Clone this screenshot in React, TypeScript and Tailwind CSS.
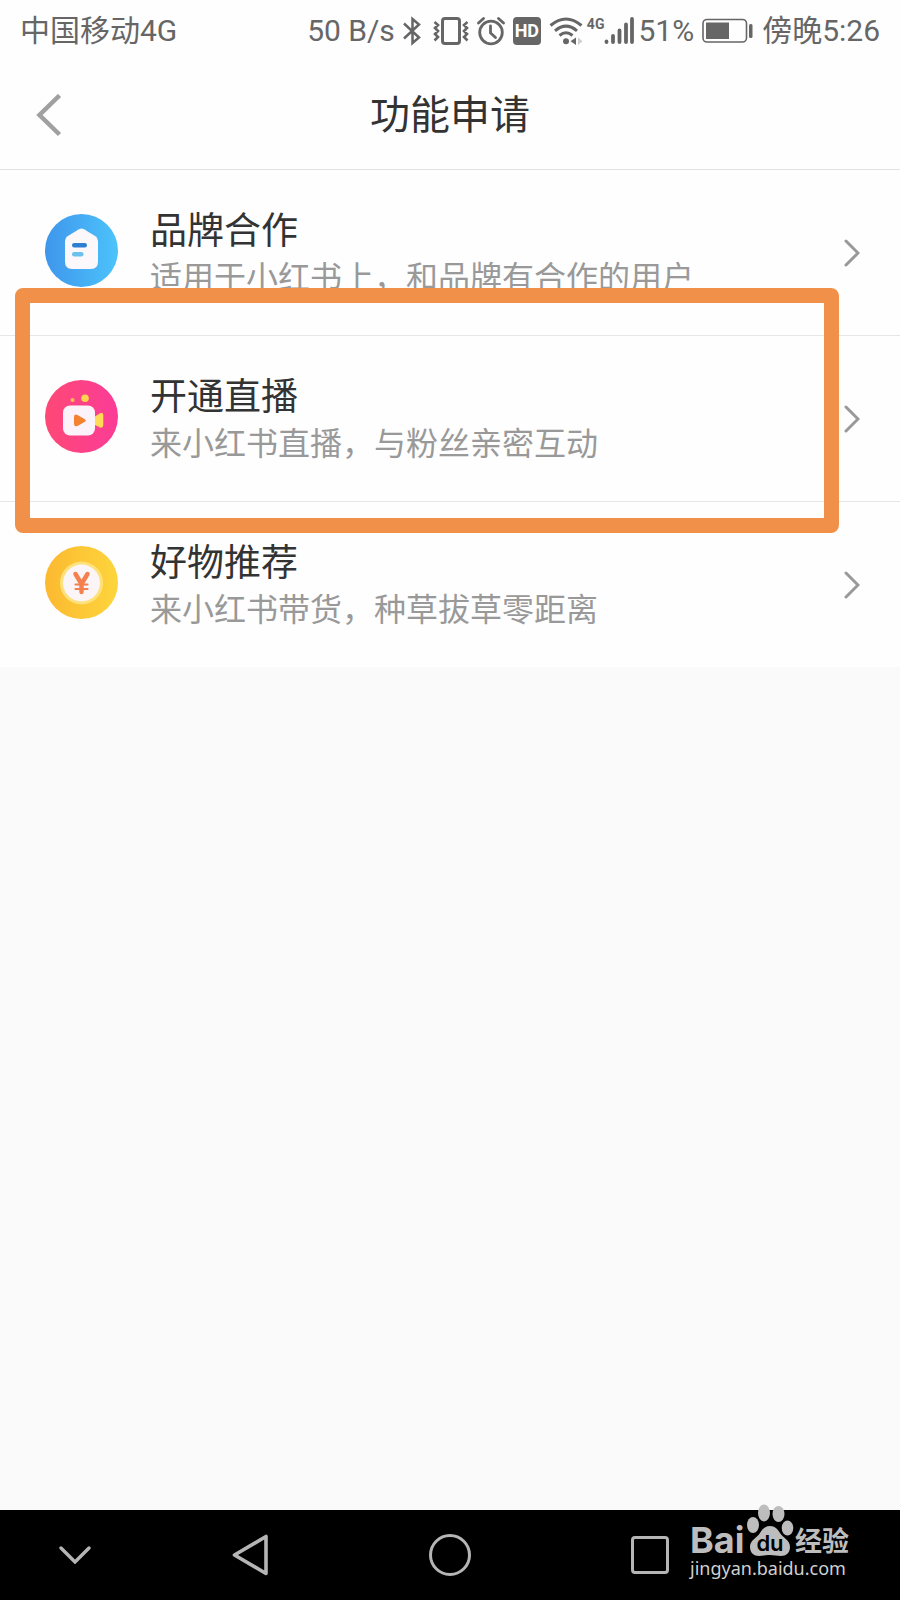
import React from "react";

interface Feature {
  title: string;
  description: string;
  icon: React.ReactNode;
}

const BrandIcon = () => (
  <svg viewBox="0 0 73 73" className="h-[73px] w-[73px] shrink-0" aria-hidden="true">
    <defs>
      <linearGradient id="brand" x1="0" x2="1">
        <stop offset="0" stopColor="#3f96ec" />
        <stop offset="1" stopColor="#4cc3fb" />
      </linearGradient>
    </defs>
    <circle cx="36.5" cy="36.5" r="36.5" fill="url(#brand)" />
    <path
      d="M34 15.2Q36.5 13.8 39 15.2L50.5 22.3Q53 24 53 27V47.5Q53 55 46 55H27Q20 55 20 47.5V27Q20 24 22.5 22.3Z"
      fill="#fbf7fb"
    />
    <rect x="27" y="29" width="15" height="4.5" rx="2.2" fill="#2f7fd0" />
    <rect x="27" y="38" width="11.5" height="4.5" rx="2.2" fill="#6cc0ee" />
  </svg>
);

const LiveIcon = () => (
  <svg viewBox="0 0 73 73" className="h-[73px] w-[73px] shrink-0" aria-hidden="true">
    <defs>
      <linearGradient id="live" x1="0" x2="1">
        <stop offset="0" stopColor="#fe4876" />
        <stop offset="1" stopColor="#fb3c97" />
      </linearGradient>
    </defs>
    <circle cx="36.5" cy="36.5" r="36.5" fill="url(#live)" />
    <circle cx="27.5" cy="20" r="2" fill="#ffc04f" />
    <circle cx="40" cy="18.3" r="3.8" fill="#ffd24f" />
    <path
      d="M50 36.5L55 33.2Q58 32 58.3 35V45Q58 48.5 55 47.5L50 45Z"
      fill="#ffd958"
    />
    <rect x="18" y="25.5" width="32" height="30" rx="7" fill="#fbf3f9" />
    <path
      d="M29 37Q29.2 33.6 32.5 35L39.5 39Q42 40.5 39.5 42L32.5 46Q29.2 47.3 29 44Z"
      fill="#f5822f"
    />
  </svg>
);

const GoodsIcon = () => (
  <svg viewBox="0 0 73 73" className="h-[73px] w-[73px] shrink-0" aria-hidden="true">
    <defs>
      <linearGradient id="goods" x1="0" x2="1">
        <stop offset="0" stopColor="#fcb930" />
        <stop offset="1" stopColor="#fdd53c" />
      </linearGradient>
    </defs>
    <circle cx="36.5" cy="36.5" r="36.5" fill="url(#goods)" />
    <circle cx="36.5" cy="37" r="21.5" fill="#ffe17c" />
    <circle cx="36.5" cy="37" r="18.5" fill="#fbf5f8" />
    <path
      d="M30.5 28L36.5 38M42.5 28L36.5 38V46"
      fill="none"
      stroke="#f4804f"
      strokeWidth="4.4"
      strokeLinecap="round"
      strokeLinejoin="round"
    />
    <path
      d="M30.5 38.5H42.5M30.5 43H42.5"
      fill="none"
      stroke="#f4804f"
      strokeWidth="2.2"
      strokeLinecap="round"
    />
  </svg>
);

const features: Feature[] = [
  {
    title: "品牌合作",
    description: "适用于小红书上，和品牌有合作的用户",
    icon: <BrandIcon />,
  },
  {
    title: "开通直播",
    description: "来小红书直播，与粉丝亲密互动",
    icon: <LiveIcon />,
  },
  {
    title: "好物推荐",
    description: "来小红书带货，种草拔草零距离",
    icon: <GoodsIcon />,
  },
];

const BluetoothIcon = () => (
  <svg viewBox="0 0 18 30" className="h-[30px] w-[18px]" aria-hidden="true">
    <path
      d="M1 7.5L16 21.5L9.5 27V3L16 8.5L1 22.5"
      fill="none"
      stroke="currentColor"
      strokeWidth="2.5"
    />
  </svg>
);

const VibrateIcon = () => (
  <svg viewBox="0 0 36 30" className="h-[30px] w-9" aria-hidden="true">
    <rect
      x="9.5"
      y="2.5"
      width="17"
      height="25"
      rx="2.5"
      fill="none"
      stroke="currentColor"
      strokeWidth="3"
    />
    <path
      d="M1.5 6L5 9L2 12L5 15L2 18L5 21L1.5 24.5M34.5 6L31 9L34 12L31 15L34 18L31 21L34.5 24.5"
      fill="none"
      stroke="currentColor"
      strokeWidth="2.6"
    />
  </svg>
);

const AlarmIcon = () => (
  <svg viewBox="0 0 28 30" className="h-[30px] w-7" aria-hidden="true">
    <g fill="none" stroke="currentColor" strokeWidth="2.8">
      <circle cx="14" cy="16.5" r="11.3" />
      <path d="M13.5 10V17L18.5 21.5" strokeLinecap="round" />
      <path d="M1.5 7L6.5 2.5M26.5 7L21.5 2.5" strokeLinecap="round" />
    </g>
  </svg>
);

const WifiIcon = () => (
  <svg viewBox="0 0 34 30" className="h-[30px] w-[34px]" aria-hidden="true">
    <g fill="none" stroke="currentColor" strokeWidth="3">
      <path d="M1.5 9.5Q17 -3.5 32.5 9.5" />
      <path d="M6 14.8Q17 5.5 28 14.8" />
      <path d="M10.5 19.5Q17 14 23.5 19.5" />
    </g>
    <circle cx="17" cy="25.3" r="3" fill="currentColor" />
    <path d="M27 21.5V29L21.5 25.3Z" fill="currentColor" />
    <path d="M29 21.5V29L33.5 25.3Z" fill="#cfcfcf" />
  </svg>
);

const SignalIcon = () => (
  <svg viewBox="0 0 30 30" className="h-[30px] w-[30px]" aria-hidden="true">
    <path
      d="M2.5 25.5V26M9 20V26M15.5 14.5V26M22 8.5V26M28 3V26"
      fill="none"
      stroke="currentColor"
      strokeWidth="3.8"
      strokeLinecap="round"
    />
  </svg>
);

const BatteryIcon = () => (
  <svg viewBox="0 0 52 26" className="h-[26px] w-[52px]" aria-hidden="true">
    <rect
      x="1"
      y="1.5"
      width="43.5"
      height="22.5"
      rx="4"
      fill="none"
      stroke="currentColor"
      strokeWidth="1.6"
    />
    <rect x="4" y="4.5" width="23" height="16.5" fill="currentColor" />
    <rect x="47" y="6" width="3.5" height="14" rx="1.5" fill="currentColor" />
  </svg>
);

const StatusBar = () => (
  <div className="flex h-[62px] items-center justify-between px-5 font-[Roboto,'Noto_Sans_CJK_SC',sans-serif] text-3xl leading-none text-[#666]">
    <span>中国移动4G</span>
    <div className="flex items-center whitespace-nowrap">
      <span className="mr-2">50 B/s</span>
      <BluetoothIcon />
      <span className="ml-3">
        <VibrateIcon />
      </span>
      <span className="ml-2">
        <AlarmIcon />
      </span>
      <span className="ml-2 flex h-7 w-7 items-center justify-center rounded bg-[#666] text-lg font-bold text-white">
        HD
      </span>
      <span className="ml-2">
        <WifiIcon />
      </span>
      <span className="ml-1 self-start text-sm font-bold leading-4">4G</span>
      <SignalIcon />
      <span className="ml-1 mr-2">51%</span>
      <BatteryIcon />
      <span className="ml-2">傍晚5:26</span>
    </div>
  </div>
);

const Header = () => (
  <header className="grid h-[108px] grid-cols-[1fr_auto_1fr] items-center border-b border-[#e3e3e3]">
    <button type="button" aria-label="返回" className="ml-9 w-fit text-[#a0a0a0]">
      <svg viewBox="0 0 26 44" className="h-11 w-[26px]" aria-hidden="true">
        <path
          d="M23.5 1.5L3.5 21L23.5 40.5"
          fill="none"
          stroke="currentColor"
          strokeWidth="4.5"
        />
      </svg>
    </button>
    <h1 className="pb-2 text-[40px] leading-none text-[#333]">功能申请</h1>
  </header>
);

const FeatureRow = ({ title, description, icon }: Feature) => (
  <li className="border-b border-[#e6e6e6] last:border-b-0">
    <button
      type="button"
      className="flex h-[165px] w-full items-center pl-[45px] pr-10 text-left"
    >
      <span className="flex flex-1 items-center gap-8 pb-1">
        {icon}
        <span>
          <span className="block text-[37px] leading-[48px] text-[#333]">{title}</span>
          <span className="block text-[32px] leading-[46px] text-[#999]">
            {description}
          </span>
        </span>
      </span>
      <svg viewBox="0 0 16 28" className="h-7 w-4 text-[#999]" aria-hidden="true">
        <path
          d="M2 2L14 14L2 26"
          fill="none"
          stroke="currentColor"
          strokeWidth="3"
          strokeLinecap="round"
        />
      </svg>
    </button>
  </li>
);

const Watermark = () => (
  <div className="pointer-events-none absolute bottom-[22px] right-[51px] w-[159px] text-[#bdbdbd]">
    <div className="flex items-end justify-between">
      <span className="font-[Inter,sans-serif] text-4xl font-bold leading-9">Bai</span>
      <svg viewBox="0 0 48 54" className="h-[54px] w-12" aria-hidden="true">
        <g fill="currentColor">
          <ellipse cx="7" cy="21" rx="6" ry="8" />
          <ellipse cx="18" cy="9" rx="6" ry="8.5" />
          <ellipse cx="32.5" cy="10" rx="6" ry="8" />
          <ellipse cx="41.5" cy="24" rx="5.8" ry="7.5" />
          <path d="M24 22C29 22 31.5 25 34 29C37 34 44 36 44 43C44 49 40 52 35 52C31 52 28 51 24 51C20 51 17 52 13 52C8 52 4 49 4 43C4 36 11 34 14 29C16.5 25 19 22 24 22Z" />
        </g>
        <text
          x="24"
          y="47"
          textAnchor="middle"
          fill="#000"
          className="font-[Inter,sans-serif] text-[22px] font-semibold"
        >
          du
        </text>
      </svg>
      <span className="text-[27px] font-bold leading-9">经验</span>
    </div>
    <div className="font-['Noto_Sans',sans-serif] text-lg leading-5 text-[#d0d0d0]">
      jingyan.baidu.com
    </div>
  </div>
);

const NavBar = () => (
  <nav className="relative grid h-[90px] grid-cols-[3fr_4fr_4fr_4fr_3fr] bg-black text-[#b5b5b5]">
    <button type="button" aria-label="收起" className="flex items-center justify-center">
      <svg viewBox="0 0 32 18" className="h-[18px] w-8" aria-hidden="true">
        <path
          d="M2 2L16 16L30 2"
          fill="none"
          stroke="currentColor"
          strokeWidth="3.4"
          strokeLinecap="round"
        />
      </svg>
    </button>
    <button type="button" aria-label="后退" className="flex items-center justify-center">
      <svg viewBox="0 0 38 42" className="h-[42px] w-[38px]" aria-hidden="true">
        <path
          d="M35 2.5V39.5L3.5 21Z"
          fill="none"
          stroke="currentColor"
          strokeWidth="3.6"
          strokeLinejoin="round"
        />
      </svg>
    </button>
    <button type="button" aria-label="主页" className="flex items-center justify-center">
      <span className="h-[42px] w-[42px] rounded-full border-[3px] border-[#b5b5b5]" />
    </button>
    <button type="button" aria-label="最近" className="flex items-center justify-center">
      <span className="h-[38px] w-[38px] rounded border-[3px] border-[#b5b5b5]" />
    </button>
    <Watermark />
  </nav>
);

const App = () => {
  return (
    <div className="flex min-h-screen flex-col bg-[#fafafa] font-['Noto_Sans_CJK_SC',sans-serif]">
      <div className="bg-[#fefefe]">
        <StatusBar />
        <Header />
      </div>
      <main className="relative flex-1">
        <ul className="bg-[#fefefe]">
          {features.map((feature) => (
            <FeatureRow key={feature.title} {...feature} />
          ))}
        </ul>
        {/* Highlight frame around the live streaming entry */}
        <div className="pointer-events-none absolute left-[15px] right-[61px] top-[118px] h-[245px] rounded-lg border-[15px] border-[#f19149]" />
      </main>
      <NavBar />
    </div>
  );
};

export default App;
